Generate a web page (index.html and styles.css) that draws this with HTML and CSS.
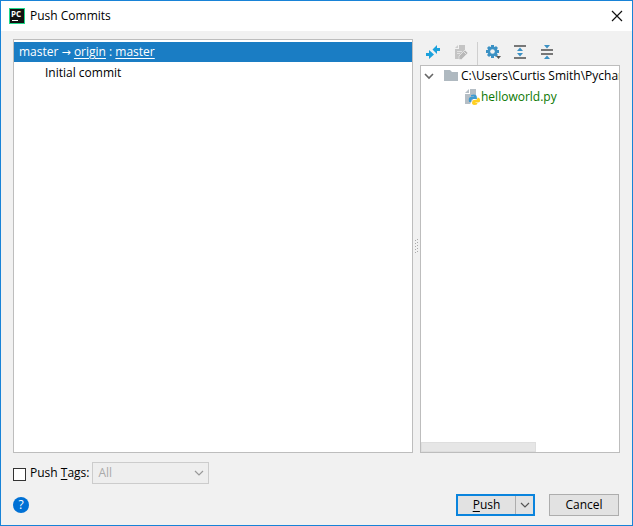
FILE: index.html
```html
<!DOCTYPE html>
<html lang="en">
<head>
<meta charset="utf-8">
<title>Push Commits</title>
<link rel="stylesheet" href="styles.css">
</head>
<body>
<div class="window">
  <header class="titlebar">
    <svg class="app-icon" width="16" height="16" viewBox="0 0 16 16" aria-hidden="true">
      <rect width="16" height="16" fill="#21d789"/>
      <rect x="1" y="1" width="14" height="14" fill="#111"/>
      <text x="2" y="9" class="app-letters">PC</text>
      <rect x="3" y="12" width="6" height="1" fill="#fff"/>
    </svg>
    <h1 class="title">Push Commits</h1>
    <button class="close" type="button" aria-label="Close">
      <svg width="12" height="12" viewBox="0 0 12 12"><path d="M1 1L11 11M11 1L1 11" stroke="#111" stroke-width="1.2" fill="none"/></svg>
    </button>
  </header>

  <main class="content">
    <div class="split">
      <section class="commits">
        <div class="row selected">master <span class="to">→</span> <a href="#origin">origin</a> : <a href="#master">master</a></div>
        <div class="row commit">Initial commit</div>
      </section>
      <div class="grip">
        <svg width="5" height="15" viewBox="0 0 5 15" fill="#aaa" aria-hidden="true">
          <path d="M3 0h1v1h-1zM1 1h1v1h-1zM3 3h1v1h-1zM1 4h1v1h-1zM3 6h1v1h-1zM1 7h1v1h-1zM3 9h1v1h-1zM1 10h1v1h-1zM3 12h1v1h-1zM1 13h1v1h-1z"/>
        </svg>
      </div>
      <section class="details">
        <div class="toolbar">
          <button class="tool" type="button" aria-label="Show diff">
            <svg width="16" height="16" viewBox="0 0 16 16" fill="#1ba1dc"><path d="M1 9h3V6l5 4.500L4 15v-3H1zM15 4h-3V1L7.500 5.500 12 10V7h3z"/></svg>
          </button>
          <button class="tool" type="button" aria-label="Edit source" disabled>
            <svg width="16" height="16" viewBox="0 0 16 16"><path d="M7 1h6v5l-6 6v3H3V5h4z" fill="#c4c4c4"/><path d="M6 1v3H3z" fill="#cdcdcd"/><path d="M5 7.500h5M5 9.500h3" stroke="#e2e2e2"/><path d="M7 15.500V12l6-6 3 3-6.500 6.500z" fill="#b8b8b8" stroke="#f1f1f1" stroke-width=".6"/><path d="M11.500 7.500l3 3" stroke="#e2e2e2"/></svg>
          </button>
          <span class="separator"></span>
          <button class="tool" type="button" aria-label="Settings">
            <svg width="16" height="16" viewBox="0 0 16 16"><g stroke="#3b91c4" stroke-width="3"><path d="M7.500 1v13M1 7.500h13M3 3l9 9M12 3l-9 9"/></g><circle cx="7.500" cy="7.500" r="5" fill="#3b91c4"/><circle cx="7.500" cy="7.500" r="2.300" fill="#f2f2f2"/><path d="M11 12h5l-2.500 3z" fill="#555"/></svg>
          </button>
          <button class="tool" type="button" aria-label="Expand all">
            <svg width="16" height="16" viewBox="0 0 16 16"><path d="M2 1h12v2H2zM2 13h12v2H2z" fill="#777"/><path d="M8 3.500L11 7H5zM8 12.500L11 9H5z" fill="#3b91c4"/></svg>
          </button>
          <button class="tool" type="button" aria-label="Collapse all">
            <svg width="16" height="16" viewBox="0 0 16 16"><path d="M2 5h12v2H2zM2 9h12v2H2z" fill="#777"/><path d="M5 1h6L8 4.500zM5 15h6l-3-3.500z" fill="#3b91c4"/></svg>
          </button>
        </div>
        <div class="files">
          <div class="tree">
            <div class="row folder">
              <svg class="chevron" width="10" height="10" viewBox="0 0 10 10" aria-hidden="true"><path d="M1 3l4 4 4-4" fill="none" stroke="#666" stroke-width="1.600"/></svg>
              <svg class="icon" width="16" height="16" viewBox="0 0 16 16" aria-hidden="true"><path d="M1 2h6l2 2h6v9H1z" fill="#afb9c0"/></svg>
              <span>C:\Users\Curtis Smith\PycharmProjects\helloworld</span>
            </div>
            <div class="row file">
              <svg class="icon" width="16" height="16" viewBox="0 0 16 16" aria-hidden="true"><path d="M6 0h6v6L6 15H1V5h5z" fill="#b5bec5"/><path d="M5 0v4H1z" fill="#b5bec5"/><path d="M7 6q3-1 5 0 1 1 1 4H9q-2 0-2 3H5q-1-5 2-5h3V7.500H7z" fill="#3f9bd0"/><path d="M13.500 8.500q3 0 2.500 4-.5 1-2.500 1h-2v.5h2q0 2-2.500 2T8 14.500q0-3.500 2-3.500 3.500 .3 3.500-2.500z" fill="#ffcf22"/></svg>
              <span>helloworld.py</span>
            </div>
          </div>
          <div class="scrollbar"></div>
        </div>
      </section>
    </div>

    <div class="tags">
      <input class="check" type="checkbox" id="push-tags">
      <label for="push-tags">Push <u>T</u>ags:</label>
      <div class="combo">
        <select aria-label="Tags to push" disabled><option>All</option></select>
        <svg class="arrow" width="10" height="6" viewBox="0 0 10 6" aria-hidden="true"><path d="M1 1l4 4 4-4" fill="none" stroke="#999" stroke-width="1.200"/></svg>
      </div>
    </div>

    <footer class="actions">
      <button class="help" type="button" aria-label="Help">?</button>
      <div class="push">
        <button class="push-main" type="button"><span><u>P</u>ush</span></button>
        <button class="push-menu" type="button" aria-label="More push options">
          <svg width="10" height="6" viewBox="0 0 10 6"><path d="M1 1l4 4 4-4" fill="none" stroke="#555" stroke-width="1.200"/></svg>
        </button>
      </div>
      <button class="cancel" type="button">Cancel</button>
    </footer>
  </main>
</div>
</body>
</html>
```
FILE: styles.css
```css
* { box-sizing: border-box; }

body {
  margin: 0;
  font: 12px/20px "Open Sans", "Noto Sans", sans-serif;
  color: #000;
}

button, select {
  font: inherit;
  color: inherit;
  margin: 0;
  padding: 0;
}

svg { display: block; flex: none; }

u { text-underline-offset: 2px; }

.window {
  display: flex;
  flex-direction: column;
  height: 100vh;
  border: 1px solid #1883d7;
  background: #f1f1f1;
}

.titlebar {
  display: flex;
  align-items: center;
  height: 30px;
  padding: 0 9px 0 8px;
  background: #fff;
}

.app-letters {
  font: bold 8px "Open Sans", sans-serif;
  fill: #fff;
}

.title {
  flex: 1;
  margin: 0 0 0 5px;
  font-size: 12px;
  font-weight: 400;
}

.close {
  border: 0;
  background: none;
}

.content {
  display: flex;
  flex-direction: column;
  flex: 1;
  min-height: 0;
  padding: 8px 12px 9px;
}

.split {
  display: grid;
  grid-template-columns: 2fr 7px 1fr;
  flex: 1;
  min-height: 0;
}

.commits {
  min-width: 0;
  padding-top: 2px;
  border: 1px solid #bdbdbd;
  background: #fff;
}

.row {
  height: 20px;
  white-space: nowrap;
}

.selected {
  padding: 0 5px;
  margin-bottom: 1px;
  background: #1a7dc4;
  color: #fff;
}

.selected a {
  color: inherit;
  text-underline-offset: 2px;
}

.to {
  font-family: "DejaVu Sans", sans-serif;
  font-size: 11px;
}

.commit { padding-left: 31px; }

.grip {
  display: flex;
  align-items: center;
  justify-content: center;
}

.details {
  display: flex;
  flex-direction: column;
  min-width: 0;
}

.toolbar {
  display: flex;
  align-items: center;
  gap: 11px;
  height: 26px;
  padding-left: 5px;
}

.tool {
  border: 0;
  background: none;
}

.separator {
  align-self: flex-end;
  width: 1px;
  height: 23px;
  margin: 0 -4px 0 -2px;
  background: #cfcfcf;
}

.files {
  display: flex;
  flex-direction: column;
  flex: 1;
  min-height: 0;
  border: 1px solid #bdbdbd;
  background: #fff;
}

.tree {
  flex: 1;
  overflow: hidden;
}

.tree .row {
  display: flex;
  align-items: center;
  margin-bottom: 1px;
}

.folder { padding-left: 3px; }

.folder .icon { margin: 0 2px 0 9px; }

.file {
  padding-left: 43px;
  color: #0a7700;
}

.file .icon { margin-right: 1px; }

.scrollbar {
  width: 58%;
  height: 10px;
  border: 1px solid #dedede;
  background: #e6e6e6;
}

.tags {
  display: flex;
  align-items: center;
  height: 22px;
  margin-top: 9px;
}

.check {
  appearance: none;
  width: 13px;
  height: 13px;
  margin: 2px 4px 0 0;
  border: 1px solid #333;
  background: #fff;
}

.combo {
  position: relative;
  width: 117px;
  margin-left: 3px;
}

.combo select {
  appearance: none;
  display: block;
  width: 100%;
  height: 22px;
  padding: 0 5px;
  border: 1px solid #ccc;
  border-radius: 0;
  background: #eee;
  color: #aaa;
  opacity: 1;
}

.arrow {
  position: absolute;
  top: 8px;
  right: 5px;
  pointer-events: none;
}

.actions {
  display: flex;
  align-items: center;
  height: 22px;
  margin-top: 10px;
}

.help {
  width: 16px;
  height: 16px;
  margin-right: auto;
  border: 0;
  border-radius: 50%;
  background: #0071d5;
  color: #fff;
  line-height: 16px;
}

.push {
  display: flex;
  height: 22px;
  margin-right: 14px;
  border: 2px solid #0a84dd;
  background: #e2e2e2;
}

.push button {
  border: 0;
  background: none;
}

.push .push-main { width: 57px; line-height: 18px; }

.push .push-menu {
  display: flex;
  align-items: center;
  justify-content: center;
  width: 18px;
  border-left: 1px solid #adadad;
}

.cancel {
  width: 70px;
  height: 22px;
  margin-right: 1px;
  border: 1px solid #adadad;
  background: #e2e2e2;
}
```
